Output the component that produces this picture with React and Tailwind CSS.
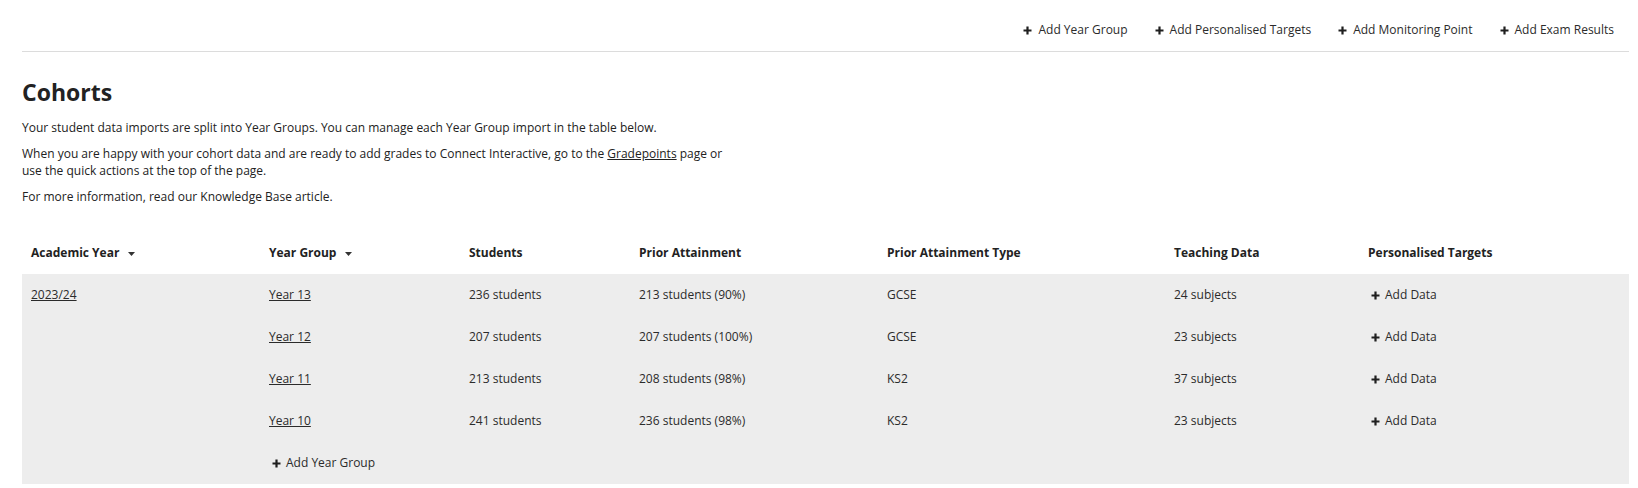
import { Fragment } from "react";

const topActions = [
  "Add Year Group",
  "Add Personalised Targets",
  "Add Monitoring Point",
  "Add Exam Results",
];

const yearGroups = [
  { name: "Year 13", students: "236 students", prior: "213 students (90%)", type: "GCSE", teaching: "24 subjects" },
  { name: "Year 12", students: "207 students", prior: "207 students (100%)", type: "GCSE", teaching: "23 subjects" },
  { name: "Year 11", students: "213 students", prior: "208 students (98%)", type: "KS2", teaching: "37 subjects" },
  { name: "Year 10", students: "241 students", prior: "236 students (98%)", type: "KS2", teaching: "23 subjects" },
];

function PlusIcon() {
  return (
    <svg width="9" height="9" viewBox="0 0 9 9" className="shrink-0" aria-hidden="true">
      <path d="M4.5 0.5v8M0.5 4.5h8" stroke="#1f1f1f" strokeWidth="2.2" />
    </svg>
  );
}

function SortCaret() {
  return (
    <svg width="7" height="4" viewBox="0 0 7 4" className="ml-[9px] inline-block" aria-hidden="true">
      <path d="M0 0h7L3.5 4z" fill="#333" />
    </svg>
  );
}

function AddLink({ label }) {
  return (
    <span className="ml-[3px] inline-flex items-center gap-[5px] pt-[1px] text-[#2b2b2b]">
      <PlusIcon />
      {label}
    </span>
  );
}

const headCell = "h-[42px] text-left align-middle text-[12px] font-bold text-[#222]";
const bodyCell = "h-[42px] align-middle text-[12px] text-[#2b2b2b]";

export default function App() {
  return (
    <div className="min-h-[488px] bg-white pl-[22px] pr-[9px] font-['Open_Sans',sans-serif] text-[#222]">
      <div className="flex h-[52px] items-start justify-end gap-[27px] border-b border-[#dcdcdc] pr-[15px] pt-[21px] text-[12px] leading-[18px]">
        {topActions.map((action) => (
          <span key={action} className="inline-flex items-center gap-[6px] text-[#2b2b2b]">
            <PlusIcon />
            {action}
          </span>
        ))}
      </div>

      <h1 className="mt-[24px] text-[23px] font-bold leading-[32px] text-[#222]">
        Cohorts
      </h1>

      <div className="mt-[11px] max-w-[715px] space-y-[9px] text-[12px] leading-[17px] text-[#222]">
        <p>
          Your student data imports are split into Year Groups. You can manage
          each Year Group import in the table below.
        </p>
        <p>
          When you are happy with your cohort data and are ready to add grades
          to Connect Interactive, go to the{" "}
          <span className="underline">Gradepoints</span> page or use the quick
          actions at the top of the page.
        </p>
        <p>For more information, read our Knowledge Base article.</p>
      </div>

      <table className="mt-[27px] w-full table-fixed border-collapse">
        <colgroup>
          <col className="w-[247px]" />
          <col className="w-[200px]" />
          <col className="w-[170px]" />
          <col className="w-[248px]" />
          <col className="w-[287px]" />
          <col className="w-[194px]" />
          <col />
        </colgroup>
        <thead>
          <tr>
            <th className={`${headCell} pl-[9px]`}>
              Academic Year
              <SortCaret />
            </th>
            <th className={headCell}>
              Year Group
              <SortCaret />
            </th>
            <th className={headCell}>Students</th>
            <th className={headCell}>Prior Attainment</th>
            <th className={headCell}>Prior Attainment Type</th>
            <th className={headCell}>Teaching Data</th>
            <th className={headCell}>Personalised Targets</th>
          </tr>
        </thead>
        <tbody className="bg-[#ededed]">
          {yearGroups.map((group, i) => (
            <Fragment key={group.name}>
              <tr>
                {i === 0 && (
                  <td rowSpan={5} className="pl-[9px] pt-[12px] align-top text-[12px] leading-[17px] text-[#2b2b2b]">
                    <span className="underline">2023/24</span>
                  </td>
                )}
                <td className={bodyCell}>
                  <span className="underline">{group.name}</span>
                </td>
                <td className={bodyCell}>{group.students}</td>
                <td className={bodyCell}>{group.prior}</td>
                <td className={bodyCell}>{group.type}</td>
                <td className={bodyCell}>{group.teaching}</td>
                <td className={bodyCell}>
                  <AddLink label="Add Data" />
                </td>
              </tr>
            </Fragment>
          ))}
          <tr>
            <td className={bodyCell}>
              <AddLink label="Add Year Group" />
            </td>
            <td className={bodyCell} colSpan={5} />
          </tr>
        </tbody>
      </table>
    </div>
  );
}
